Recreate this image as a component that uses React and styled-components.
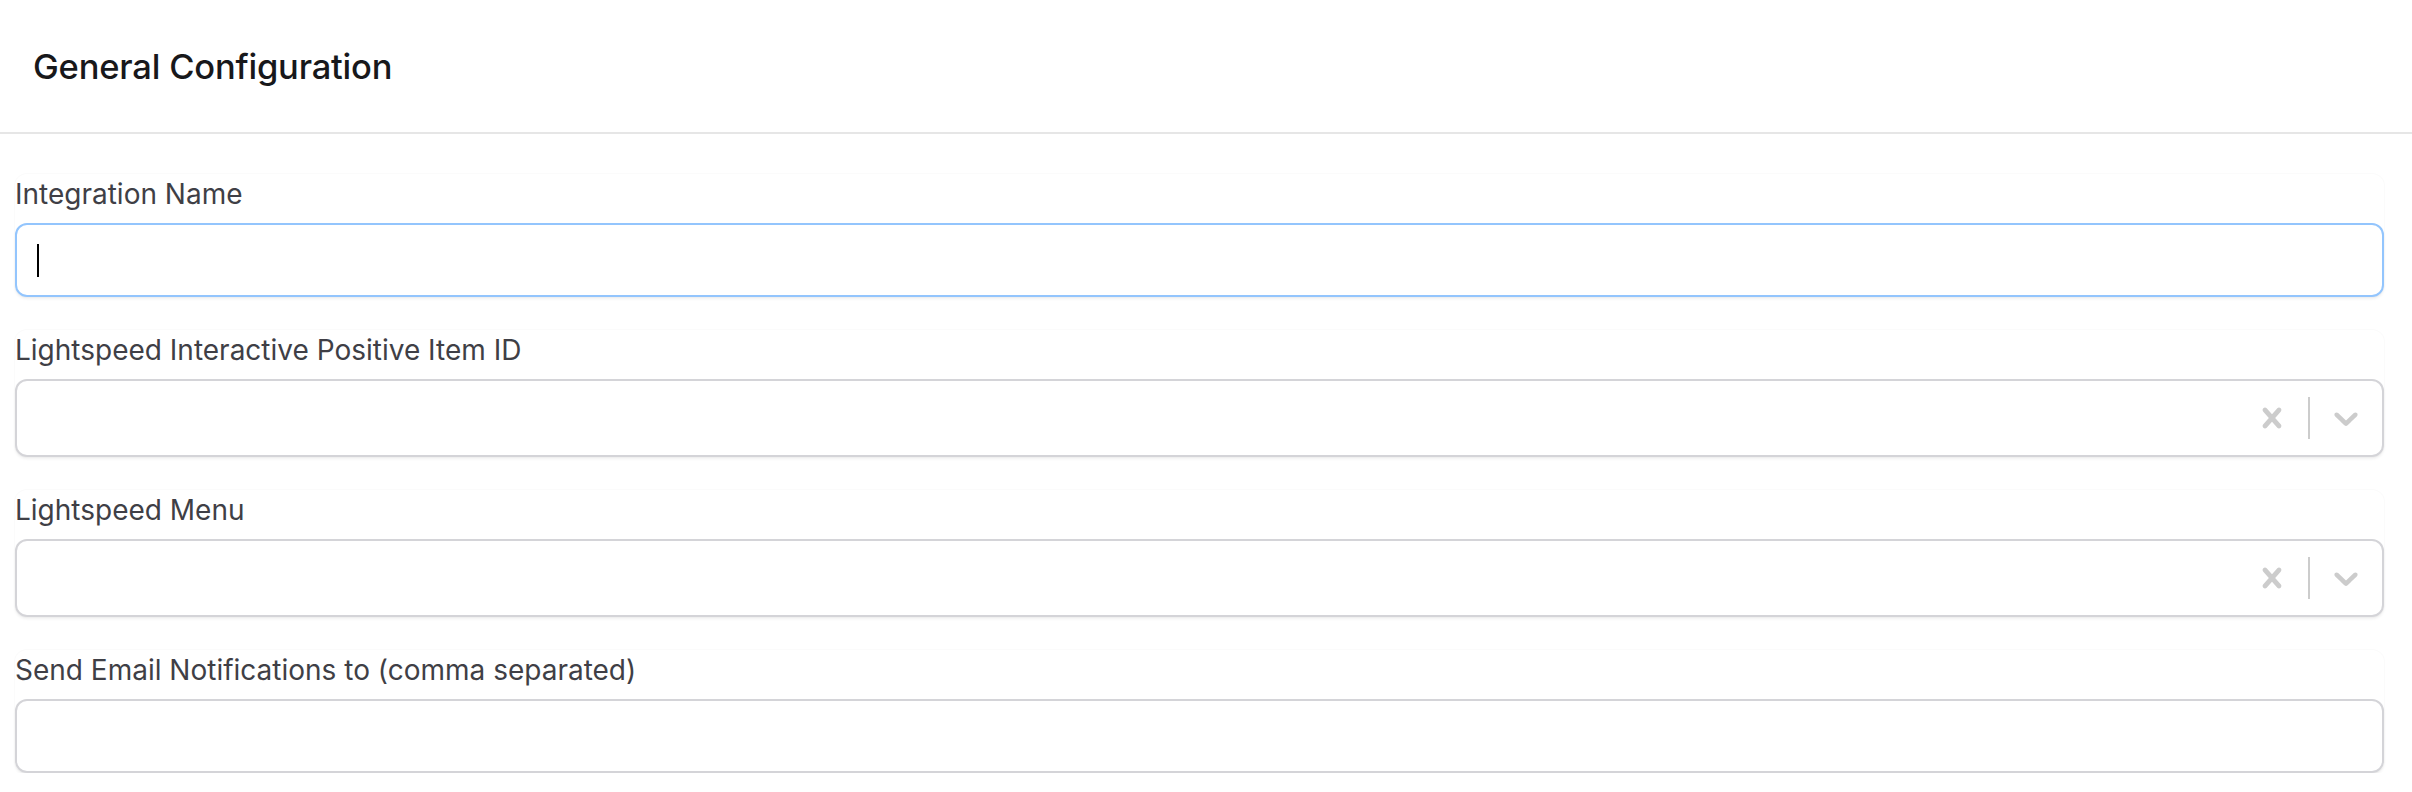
import React from 'react';
import styled, { createGlobalStyle } from 'styled-components';

const GlobalStyle = createGlobalStyle`
  body {
    margin: 0;
    background: #fff;
    font-family: Inter, "Noto Sans", sans-serif;
  }
`;

const Header = styled.header`
  height: 132px;
  display: flex;
  align-items: center;
  padding-left: 33px;
  border-bottom: 2px solid #e6e6e6;

  h1 {
    margin: 0;
    font-size: 34.5px;
    font-weight: 500;
    color: #18181b;
    letter-spacing: -0.2px;
  }
`;

const Form = styled.form`
  display: flex;
  flex-direction: column;
  gap: 33px;
  padding: 40px 28px 0 15px;
`;

const Field = styled.div`
  display: flex;
  flex-direction: column;
  gap: 9px;
  border-radius: 12px;
  box-shadow: 0 0 0 1px #fbfbfb;
`;

const Label = styled.label`
  font-size: 28px;
  line-height: 40px;
  color: #3f3f46;
`;

const TextBox = styled.div`
  box-sizing: border-box;
  height: 74px;
  display: flex;
  align-items: center;
  padding-left: 20px;
  border: 2px solid ${(p) => (p.$focused ? '#93c5fd' : '#d4d4d8')};
  border-radius: 12px;
  box-shadow: 0 2px 3px rgba(0, 0, 0, 0.06);
  background: #fff;
`;

const Caret = styled.span`
  width: 2px;
  height: 33px;
  background: #000;
`;

const Select = styled.div`
  box-sizing: border-box;
  height: 78px;
  display: flex;
  align-items: center;
  border: 2px solid #d4d4d8;
  border-radius: 12px;
  box-shadow: 0 2px 3px rgba(0, 0, 0, 0.06);
  background: #fff;
`;

const Value = styled.div`
  flex: 1;
`;

const Indicator = styled.div`
  display: flex;
  padding: 16px;
  color: #cccccc;

  svg {
    width: 40px;
    height: 40px;
    fill: currentColor;
  }
`;

const Separator = styled.span`
  align-self: stretch;
  width: 2px;
  margin: 16px 0;
  background: #cccccc;
`;

const ClearIcon = () => (
  <svg viewBox="0 0 20 20">
    <path d="M14.348 14.849c-0.469 0.469-1.229 0.469-1.697 0l-2.651-3.030-2.651 3.029c-0.469 0.469-1.229 0.469-1.697 0-0.469-0.469-0.469-1.229 0-1.697l2.758-3.15-2.759-3.152c-0.469-0.469-0.469-1.228 0-1.697s1.228-0.469 1.697 0l2.652 3.031 2.651-3.031c0.469-0.469 1.228-0.469 1.697 0s0.469 1.229 0 1.697l-2.758 3.152 2.758 3.15c0.469 0.469 0.469 1.229 0 1.698z" />
  </svg>
);

const ChevronIcon = () => (
  <svg viewBox="0 0 20 20">
    <path d="M4.516 7.548c0.436-0.446 1.043-0.481 1.576 0l3.908 3.747 3.908-3.747c0.533-0.481 1.141-0.446 1.574 0 0.436 0.445 0.408 1.197 0 1.615-0.406 0.418-4.695 4.502-4.695 4.502-0.217 0.223-0.502 0.335-0.787 0.335s-0.57-0.112-0.789-0.335c0 0-4.287-4.084-4.695-4.502s-0.436-1.17 0-1.615z" />
  </svg>
);

const SelectField = ({ label }) => (
  <Field>
    <Label>{label}</Label>
    <Select>
      <Value />
      <Indicator>
        <ClearIcon />
      </Indicator>
      <Separator />
      <Indicator>
        <ChevronIcon />
      </Indicator>
    </Select>
  </Field>
);

const App = () => (
  <>
    <GlobalStyle />
    <Header>
      <h1>General Configuration</h1>
    </Header>
    <Form>
      <Field>
        <Label>Integration Name</Label>
        <TextBox $focused>
          <Caret />
        </TextBox>
      </Field>
      <SelectField label="Lightspeed Interactive Positive Item ID" />
      <SelectField label="Lightspeed Menu" />
      <Field>
        <Label>Send Email Notifications to (comma separated)</Label>
        <TextBox />
      </Field>
    </Form>
  </>
);

export default App;
